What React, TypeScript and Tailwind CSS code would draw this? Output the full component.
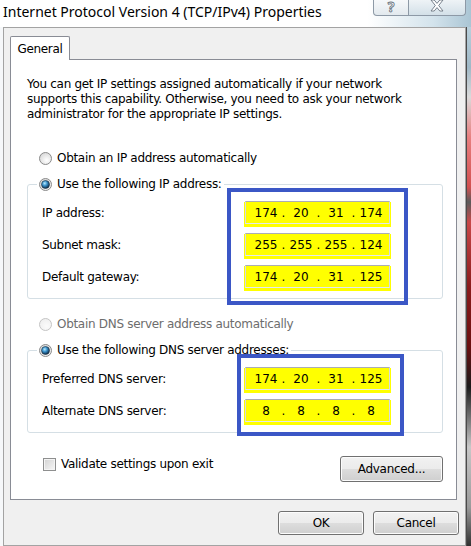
import React from "react";

function Radio({ checked, disabled, id }: { checked?: boolean; disabled?: boolean; id: string }) {
  const stroke = disabled ? "#c4c4c4" : "#8a8a8a";
  return (
    <svg width="13" height="13" viewBox="0 0 13 13" className="shrink-0">
      <defs>
        <radialGradient id={`o${id}`} cx="60%" cy="65%" r="70%">
          <stop offset="0%" stopColor={disabled ? "#fbfbfb" : "#ffffff"} />
          <stop offset="100%" stopColor={disabled ? "#eeeeee" : "#d6d6d6"} />
        </radialGradient>
        <radialGradient id={`i${id}`} cx="40%" cy="35%" r="65%">
          <stop offset="0%" stopColor="#b9ecff" />
          <stop offset="45%" stopColor="#3a92cc" />
          <stop offset="100%" stopColor="#0b2b48" />
        </radialGradient>
      </defs>
      <circle cx="6.5" cy="6.5" r="6" fill={`url(#o${id})`} stroke={stroke} strokeWidth="1" />
      {checked && <circle cx="6.5" cy="6.5" r="4" fill={`url(#i${id})`} stroke="#1b2f40" strokeWidth="0.6" />}
    </svg>
  );
}

function IpBox({ parts }: { parts: string[] }) {
  return (
    <div className="flex h-[23px] w-[145px] items-center border border-[#abadb3] border-x-[#d5d9df] border-b-[#e3e9ef] bg-[#ffff00] pl-[7px] tracking-normal shadow-[0_2px_0_1px_#ffff00]">
      {parts.map((p, i) => (
        <React.Fragment key={i}>
          {i > 0 && <span className="w-[9px] text-center">.</span>}
          <span className="w-[26px] text-center">{p}</span>
        </React.Fragment>
      ))}
    </div>
  );
}

function Row({ label, parts }: { label: string; parts: string[] }) {
  return (
    <div className="flex h-[23px] items-center">
      <span className="w-[203px]">{label}</span>
      <IpBox parts={parts} />
    </div>
  );
}

const btn =
  "flex items-center justify-center rounded-[3px] border border-[#707070] bg-[linear-gradient(to_bottom,#f2f2f2_0%,#ebebeb_49%,#dddddd_50%,#cfcfcf_100%)] shadow-[inset_0_0_0_1px_#fcfcfc]";

export default function App() {
  return (
    <div className="relative h-[546px] w-[471px] overflow-hidden bg-white font-['DejaVu_Sans',sans-serif] text-[12px] tracking-[-0.3px] text-black">
      {/* Title bar */}
      <div className="flex h-[27px] items-start bg-[linear-gradient(to_right,#ffffff_0%,#ffffff_78%,#d3e3ec_92%,#aac5d4_100%)]">
        <span className="mt-[2px] pl-[3px] font-['Noto_Sans',sans-serif] text-[14px] leading-[20px] tracking-normal text-black">
          Internet Protocol Version 4 (TCP/IPv4) Properties
        </span>
        <div className="ml-auto mr-[5px] flex">
          <div className="flex h-[16px] w-[36px] items-start justify-center rounded-bl-[4px] border border-t-0 border-[#8d99a6] bg-[linear-gradient(to_bottom,#f6f8fa,#e2e9ee)]">
            <span className="font-['Noto_Sans',sans-serif] text-[14px] font-bold leading-[14px] tracking-normal text-white [-webkit-text-stroke:0.9px_#6c7682]">
              ?
            </span>
          </div>
          <div className="flex h-[16px] w-[57px] justify-center overflow-hidden rounded-br-[4px] border border-l-0 border-t-0 border-[#8d99a6] bg-[linear-gradient(to_bottom,#eef3f6,#d3e0e8)]">
            <svg width="14" height="12" viewBox="0 0 14 12">
              <path
                d="M1 0 L4.2 0 L7 3.4 L9.8 0 L13 0 L8.7 5.5 L13 11 L9.8 11 L7 7.6 L4.2 11 L1 11 L5.3 5.5 Z"
                fill="#ffffff"
                stroke="#6c7682"
                strokeWidth="0.9"
              />
            </svg>
          </div>
        </div>
      </div>

      {/* Body row */}
      <div className="flex h-[519px]">
        <div className="w-[3px] bg-[#f6f8fa]" />
        <div className="flex w-[463px] flex-col border border-[#a3a3a3] bg-[#f0f0f0] pt-[8px]">
          <div className="flex pl-[6px]">
            <div className="relative z-10 -mb-px flex h-[24px] w-[60px] items-center justify-center rounded-t-[2px] border border-b-0 border-[#898c95] bg-white">
              General
            </div>
          </div>
          <div className="ml-[6px] flex h-[441px] w-[447px] flex-col border border-[#898c95] bg-white pl-[16px]">
            <p className="mt-[17px] leading-[15px]">
              You can get IP settings assigned automatically if your network
              <br />
              supports this capability. Otherwise, you need to ask your network
              <br />
              administrator for the appropriate IP settings.
            </p>

            <div className="mt-[28px] flex h-[16px] items-center gap-[5px] pl-[12px]">
              <Radio id="r1" />
              <span>Obtain an IP address automatically</span>
            </div>

            <fieldset className="mt-[10px] w-[416px] rounded-[3px] border border-[#d5dfe5]">
              <legend className="ml-[9px] px-[2px]">
                <div className="flex h-[16px] items-center gap-[5px]">
                  <Radio id="r2" checked />
                  <span>Use the following IP address:</span>
                </div>
              </legend>
              <div className="flex flex-col gap-[9px] pb-[10px] pl-[14px] pt-[9px]">
                <Row label="IP address:" parts={["174", "20", "31", "174"]} />
                <Row label="Subnet mask:" parts={["255", "255", "255", "124"]} />
                <Row label="Default gateway:" parts={["174", "20", "31", "125"]} />
              </div>
            </fieldset>

            <div className="mt-[17px] flex h-[16px] items-center gap-[5px] pl-[12px]">
              <Radio id="r3" disabled />
              <span className="text-[#6d6d6d]">Obtain DNS server address automatically</span>
            </div>

            <fieldset className="mt-[10px] w-[416px] rounded-[3px] border border-[#d5dfe5]">
              <legend className="ml-[9px] px-[2px]">
                <div className="flex h-[16px] items-center gap-[5px]">
                  <Radio id="r4" checked />
                  <span>Use the following DNS server addresses:</span>
                </div>
              </legend>
              <div className="flex flex-col gap-[9px] pb-[10px] pl-[14px] pt-[9px]">
                <Row label="Preferred DNS server:" parts={["174", "20", "31", "125"]} />
                <Row label="Alternate DNS server:" parts={["8", "8", "8", "8"]} />
              </div>
            </fieldset>

            <div className="mt-[23px] flex w-[416px] items-start justify-between">
              <div className="flex h-[16px] items-center gap-[5px] pl-[16px]">
                <div className="h-[13px] w-[13px] border border-[#8e8f8f] bg-[linear-gradient(135deg,#d2d2d2,#f7f7f7)] shadow-[inset_0_0_0_1px_#f4f4f4]" />
                <span>Validate settings upon exit</span>
              </div>
              <div className={`${btn} h-[26px] w-[103px]`}>Advanced...</div>
            </div>
          </div>

          <div className="mt-[11px] flex justify-end gap-[9px] pr-[6px]">
            <div className={`${btn} h-[24px] w-[86px]`}>OK</div>
            <div className={`${btn} h-[24px] w-[86px]`}>Cancel</div>
          </div>
        </div>
        <div className="w-[5px] border-l border-[#4a4a4a] bg-[linear-gradient(to_bottom,#b9d0dc_0px,#9fb8c6_40px,#dadada_70px,#e88080_110px,#d25050_160px,#5a5a5a_175px,#c94848_195px,#8a1c1c_260px,#6a1010_320px,#1a1a1a_360px,#c8c8c8_420px,#9a9a9a_480px,#303030_519px)]" />
      </div>

      {/* Annotations */}
      <div className="pointer-events-none absolute left-[227px] top-[188px] h-[117px] w-[181px] border-[4px] border-[#3b57c6]" />
      <div className="pointer-events-none absolute left-[237px] top-[354px] h-[82px] w-[167px] border-[4px] border-[#3b57c6]" />
    </div>
  );
}
